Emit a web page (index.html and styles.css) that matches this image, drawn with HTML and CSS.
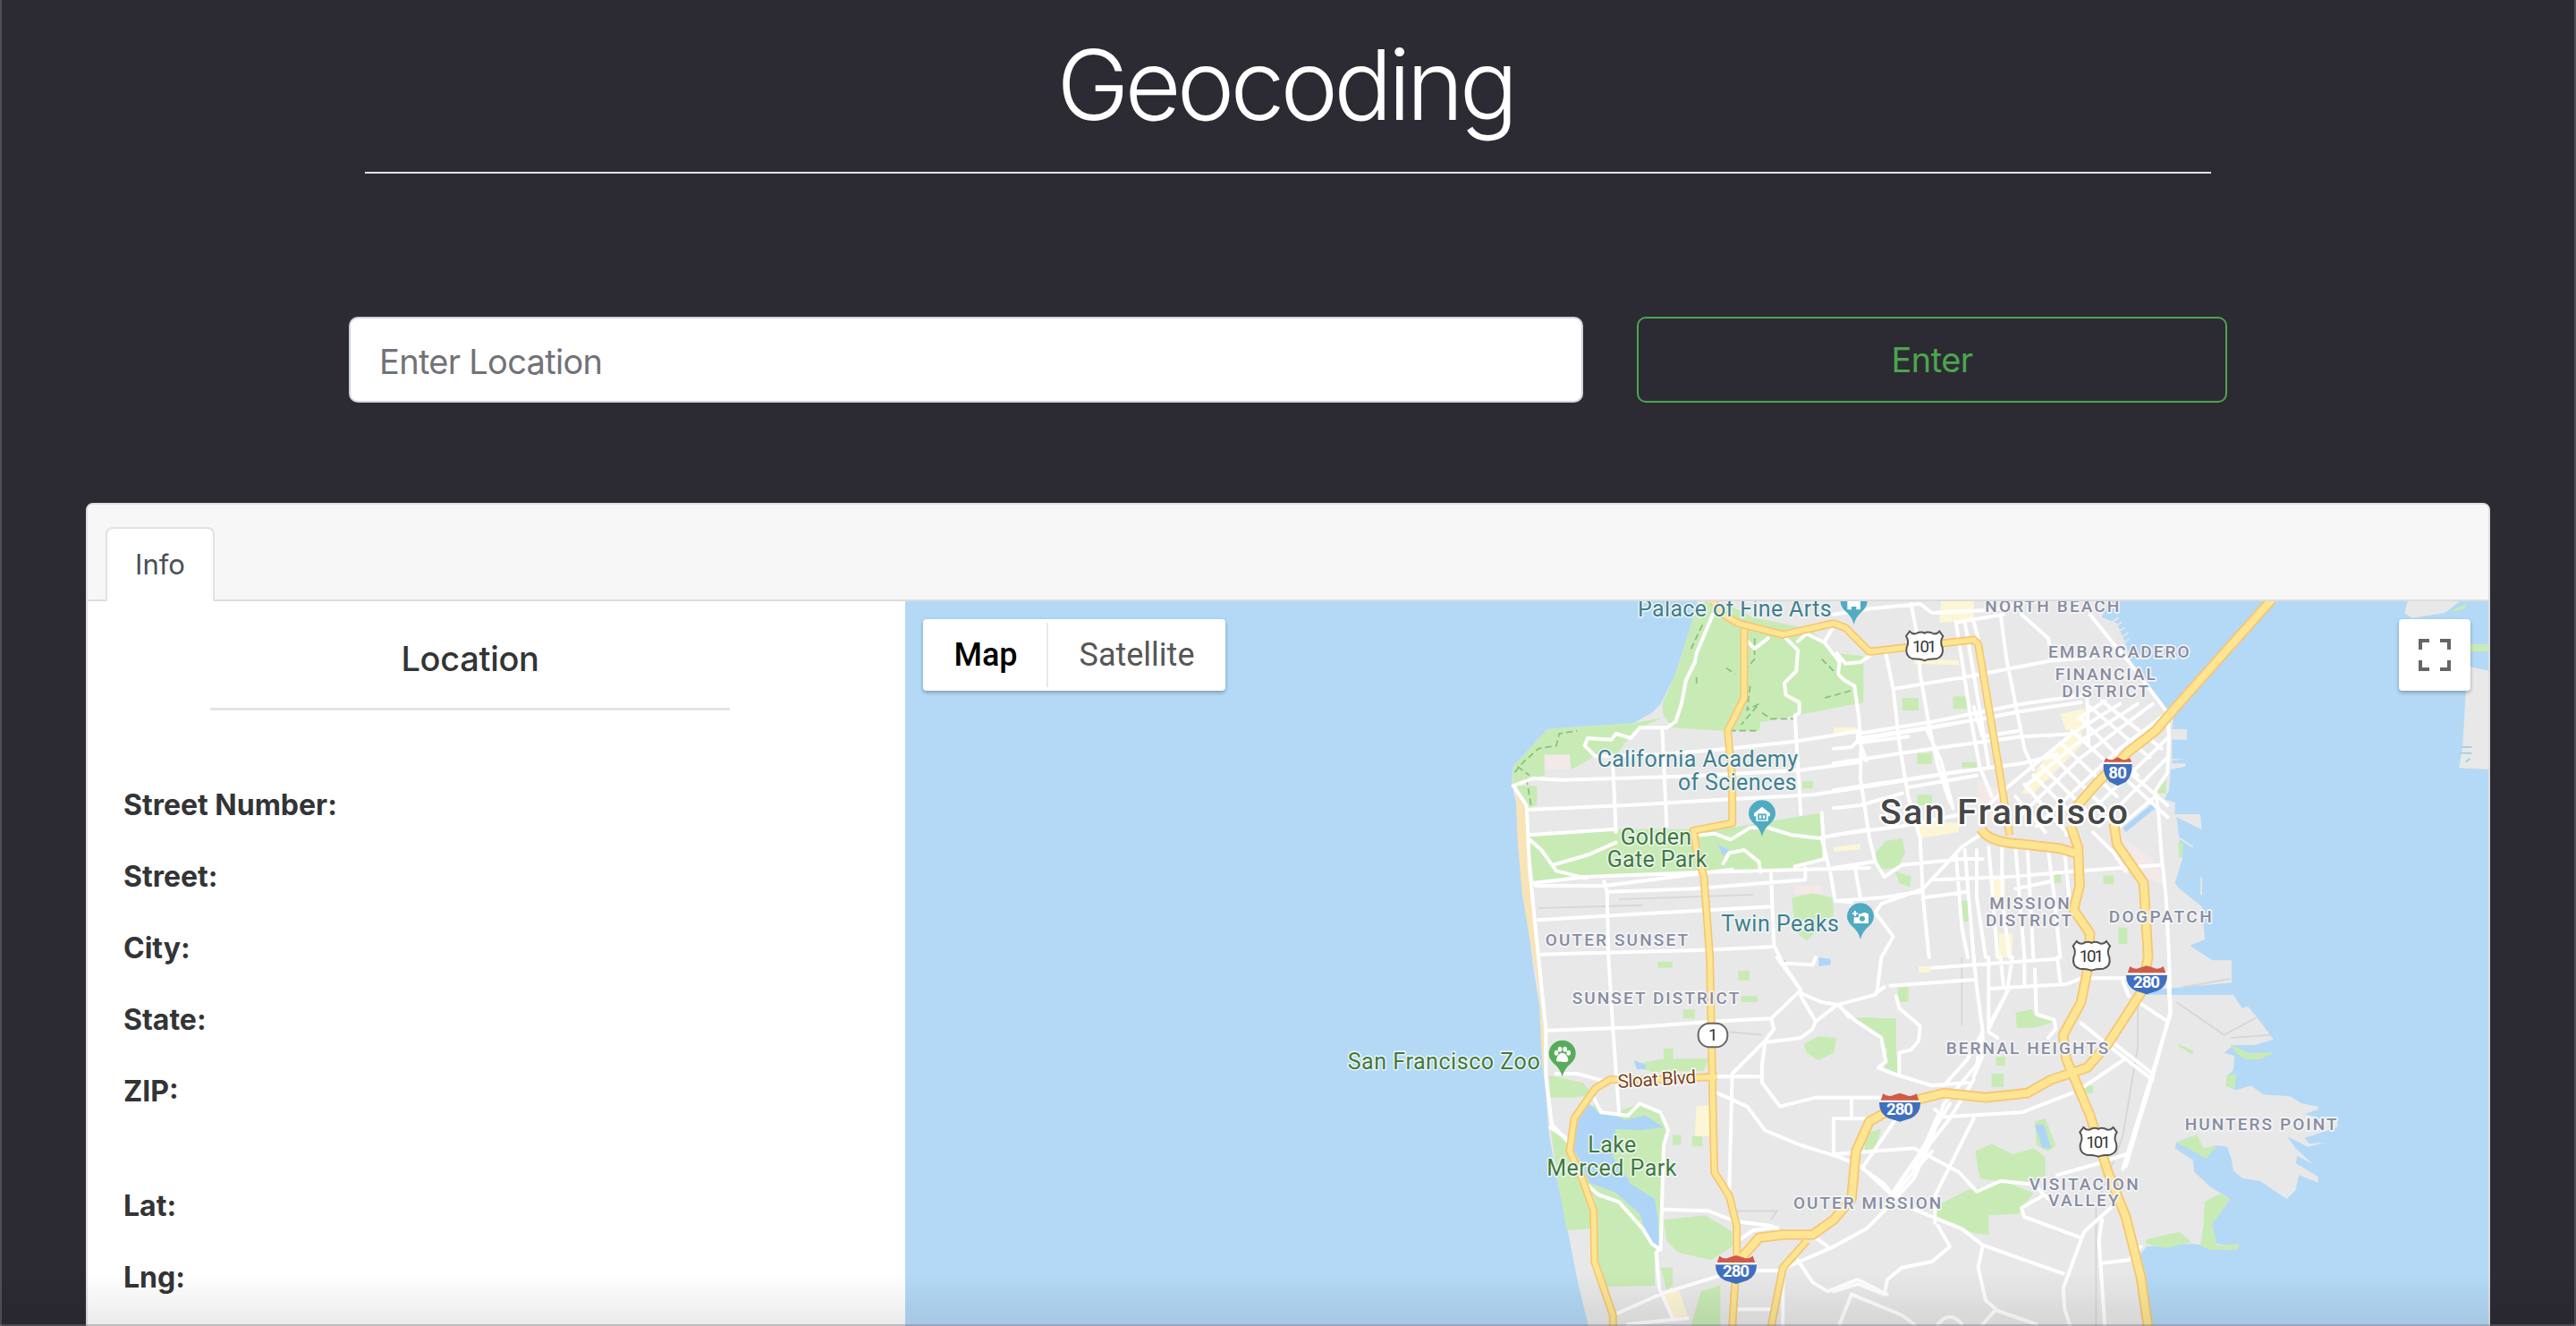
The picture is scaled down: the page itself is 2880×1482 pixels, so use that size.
FILE: index.html
```html
<!DOCTYPE html>
<html lang="en">
<head>
<meta charset="utf-8">
<title>Geocoding</title>
<link rel="stylesheet" href="styles.css">
</head>
<body>
<header class="page-header">
  <h1 class="title">Geocoding</h1>
</header>
<form class="search">
  <input class="search-input" type="text" placeholder="Enter Location">
  <button class="search-button" type="button">Enter</button>
</form>
<main class="card">
  <nav class="card-header"><a class="tab">Info</a></nav>
  <div class="card-body">
    <section class="info">
      <h2 class="info-title">Location</h2>
      <ul class="fields">
        <li>Street Number:</li>
        <li>Street:</li>
        <li>City:</li>
        <li>State:</li>
        <li>ZIP:</li>
      </ul>
      <ul class="fields coords">
        <li>Lat:</li>
        <li>Lng:</li>
      </ul>
    </section>
    <section class="map">
      <svg class="map-canvas" viewBox="-1944 6 5316 2430" preserveAspectRatio="none">
        <defs>
          <g id="us101">
            <path d="M-50-50Q-38-36-22-46Q-8-50 0-44Q8-50 22-46Q38-36 50-50L62-34Q50-16 60 4Q66 34 40 42Q14 42 0 48Q-14 42-40 42Q-66 34-60 4Q-50-16-62-34Z" fill="#fff" stroke="#555" stroke-width="6"/>
            <text class="num" x="-41" y="19" textLength="82">101</text>
          </g>
          <g id="i280">
            <path d="M-69-17H69Q70 20 38 36L0 48L-38 36Q-70 20-69-17Z" fill="#3f6fbf"/>
            <path d="M-64-24L-56-46Q-38-32-20-42L0-48L20-42Q38-32 56-46L64-24Z" fill="#cf5a48"/>
            <path d="M-68-20H68" stroke="#fff" stroke-width="5"/>
            <text class="inum" x="-45" y="25" textLength="90">280</text>
          </g>
          <g id="pin"><path d="M0 60Q-6 34-28 16Q-45 0-45-17A45 45 0 0 1 45-17Q45 0 28 16Q6 34 0 60Z"/></g>
        </defs>
        <rect x="-1944" y="0" width="5316" height="2440" fill="#b3d9f6"/>
        <!-- Peninsula -->
        <path fill="#e8e8e8" d="M715 0L700 60L640 250L590 350L560 380L500 415L340 425L210 435L150 500L95 560L90 620L105 680L110 800L125 980L150 1130L165 1250L190 1400L200 1600L215 1790L240 1930L275 2100L310 2280L350 2445H2220L2210 2260L2195 2200L2220 2170L2280 2165L2370 2160L2420 2165L2500 2182L2530 2170L2455 2160L2430 2130L2435 2090L2470 2040L2500 2010L2435 1970L2380 1920L2375 1880L2315 1840L2320 1820L2370 1800L2420 1870L2455 1830L2490 1835L2505 1880L2510 1915L2540 1940L2600 1950L2690 2010L2720 1980L2730 1930L2795 1955V1935L2720 1890L2725 1865L2775 1892L2720 1840L2690 1800L2760 1835L2820 1820L2765 1825L2750 1805L2860 1770V1740H2800L2750 1725L2795 1710V1700L2740 1690L2700 1665L2610 1660L2570 1630L2520 1645L2485 1630L2490 1595L2510 1580L2515 1530L2480 1520L2510 1495H2580L2645 1475L2590 1400L2560 1365L2540 1370L2510 1325H2290V1305L2505 1285V1210H2440L2365 1160L2415 1140L2405 1030L2330 970L2315 950L2340 870L2330 810L2320 730L2405 772L2400 720H2315V680L2280 670L2295 640L2300 570L2350 560V550H2305V540L2350 535H2305V470H2355V435H2305L2310 400L2290 370L2230 290L2170 220L2150 150L2120 80L2070 60L2090 0Z"/>
        <g fill="#e8e8e8">
          <path d="M3085 45L3095 6H3270L3220 45L3110 62ZM3290 70V310L3280 490L3268 565L3372 570V240L3300 225Z"/>
        </g>
        <g stroke="#a9cfe6" stroke-width="6" fill="none"><path d="M3275 495h35M3270 515h40M3290 545l15-12"/></g>
        <g stroke="#e4e6e8" stroke-width="6" fill="none">
          <path d="M2090 85l36-24M2100 100l36-24M2110 118l36-24M2122 135l36-24M2132 152l30-20M2403 990V930M2330 800l45 30"/>
        </g>
        <!-- Built-up tints -->
        <g fill="#f3e9e9"><path d="M200 520H285V570H205ZM2130 790L2250 880L2280 960L2210 930ZM1040 960h90v30h-90zM1650 600L1760 660V740H1660Z"/></g>
        <g fill="#fdf6d6">
          <path d="M1530 6H1640V70L1525 78ZM1170 430H1250V450H1170ZM1930 385L2010 365L2025 430L1950 440ZM1900 500L2000 440L2010 480L1840 650H1800ZM1700 930H1745V1040H1700ZM1725 1120H1770V1200H1725ZM1450 740L1590 750V780L1460 800ZM710 1700L760 1695V1800H705ZM600 2330L650 2310L680 2400L630 2410ZM1455 1230H1495V1250H1455ZM1440 195l150 10v15l-150-5zM1170 830l90-10v18l-90 8z"/>
        </g>
        <path fill="#fae3b4" d="M105 650L135 700L145 900L160 1080L180 1250L200 1500L195 1600L180 1300L150 1130L125 980L110 800Z"/>
        <!-- Parks -->
        <g fill="#c8ebb5">
          <path d="M740 6L700 60L640 250L595 350L600 390L630 430L820 442L920 440L925 412L1270 345V190L1180 180L1090 100L900 60L820 20Z"/>
          <path d="M600 395L500 415L340 425L210 435L150 500L95 560L92 620L140 600L200 590V520H285L290 570L370 525H440L500 440Z"/>
          <path d="M95 625H175V690L140 700Z"/>
          <path d="M145 795L440 770L700 770L830 765L1130 715L1135 870L1040 900L900 912L720 915L340 935L165 945Z"/>
          <path d="M1030 1000L1100 985L1170 1000L1160 1060L1080 1145L1040 1110ZM1170 1020v40l-20 10z"/>
          <path d="M1400 330h55v42h-55zM1570 325h55v42h-55zM1450 515h50v36h-50zM1600 545h50v18h-50zM1450 655h50v35h-50zM1345 810L1400 800L1410 850L1385 900L1320 905L1310 850ZM1375 910L1430 930L1425 965L1390 950ZM1595 1010h30v70h-30zM1910 920h22v30h-22zM2075 925h35v30h-35zM2125 1100h30v55h-30zM2245 635L2285 605V650H2250ZM2325 815h16v50h-12zM1065 610h35v24h-35z"/>
          <path d="M215 1595L330 1620L360 1660L300 1670L220 1670ZM500 1560L600 1540V1505H632V1540H750L735 1580L560 1585ZM850 1245h38v32h-38zM860 1330h55v20h-55zM665 1375h40v30h-40zM580 1215h50v20h-50zM1070 1490L1120 1465L1180 1470L1170 1520L1120 1545L1080 1520Z"/>
          <path d="M220 1770L285 1830L300 1880L350 1960L360 2110L275 2115L245 1950ZM305 1760L370 1690L390 1720H440L520 1690L600 1720L610 1770L595 1880L590 2170L570 2190V2300L410 2305L375 2200L370 2010L330 1950L290 1850ZM600 2080L740 2065L830 2120L830 2170L760 2215L650 2190L610 2150ZM590 2240h40v60l-20 15zM725 2320L790 2300L790 2440H690ZM630 1795h28v34h-28zM695 1800h35v34h-35z"/>
          <path d="M1220 1405L1290 1400L1330 1405H1380V1520L1390 1590L1340 1570L1350 1510L1280 1430ZM1385 1300h36v50h-36zM1780 1385L1835 1375L1850 1400L1910 1415L1850 1435L1785 1438ZM1700 1590h40v45h-40zM1715 1533h30v30h-30zM1275 1790L1330 1775L1310 1840L1275 1850ZM1645 1850L1700 1825L1770 1860L1840 1840L1880 1870V1930L1830 1960L1720 1950L1660 1940ZM1520 2030L1620 1980L1740 1950L1840 1990L1790 2060L1690 2065L1690 2130L1640 2125L1500 2065ZM1845 1750L1880 1740L1915 1830L1890 1850L1850 1830ZM2010 1630h30v26h-30z"/>
          <path d="M2325 1490l50 22v15l-45-28zM2500 1490L2560 1520L2650 1518L2600 1542H2550L2520 1520ZM2490 1595L2520 1590L2515 1640L2485 1632ZM2320 1820L2390 1795L2410 1840L2455 1830L2420 1875L2395 1860ZM2415 2020L2465 1992L2500 2010L2440 2095L2455 2165L2530 2160L2525 2180L2430 2180L2400 2165L2410 2100ZM2220 2145L2330 2120L2370 2155L2285 2175L2215 2160ZM3230 45l60-30v15zM3290 150h82v25h-82z"/>
        </g>
        <!-- Lakes and inlets -->
        <g fill="#aed5f8">
          <path d="M310 1750L350 1690L380 1720L440 1730L470 1745L540 1730L600 1770L520 1780L440 1775L430 1870L490 1960L570 2010L580 2070L585 2170L550 2150L520 2060L440 1990L350 1955L320 1880L280 1820ZM500 1545L540 1560V1575H510ZM1845 1760L1875 1760L1900 1840L1870 1840ZM2140 765L2245 680L2255 695L2150 780ZM2210 1305H2310V1325H2210ZM980 1195l45 25h-25zM780 820l40 20-20 20zM1120 1200l40 5v20l-40 5z"/>
        </g>
        <!-- Trails and rail -->
        <g stroke="#86bd7c" stroke-width="5" fill="none" stroke-dasharray="22 12">
          <path d="M100 580L130 545L180 500L240 490L250 450L310 440M730 85L690 170M905 130V200L870 240M890 290L880 370L920 350L860 420M820 440H910M930 380L960 400H1040M1130 200L1200 270M140 600L155 690M810 230l30 20M710 260v30M1140 330l90-25M110 560l40 30"/>
        </g>
        <g stroke="#d3d5d6" stroke-width="5" fill="none">
          <path d="M180 1035L530 1025M450 1005L900 990M2190 1300V1500L2140 1800L2050 2040V2436M2320 1350L2480 1460L2590 1400M2500 1470L2640 1460M1600 1200V1430M2340 1300L2500 1272M820 1450L930 1460M830 2050H980L960 2080"/>
        </g>
        <!-- Local streets -->
        <g class="streets">
          <path d="M765 50L710 180L705 210L675 270L660 350L640 410L610 430M875 135L905 165L950 130M1010 130L1050 170L1045 240L1005 280L1010 320L1055 345V380L1040 390L1060 720M1050 140L1080 115L1140 145L1190 210L1185 250L1205 270L1240 290L1255 400L1262 490L1260 600L1290 800L1310 880L1340 930M1140 140L1170 90M1180 180L1210 215L1260 210L1290 190"/>
          <path d="M610 430H520L490 465L440 450L425 470L345 465L335 490L370 525L590 520L820 500L1050 475L1260 440M595 430L610 760M95 625L160 600L260 605L440 600L700 592L1060 572L1260 545M430 560L440 780M100 630L140 690L150 900L170 1100L180 1200L205 1440L205 1600L225 1760L290 1830M140 705L480 690L820 670L1100 655L1300 625L1600 575"/>
          <path d="M145 790L440 770M150 805L190 840L240 910L340 935M230 890L350 855L440 815M720 790L770 785L825 805L890 765H950L1030 790L1120 800L1200 785L1290 770M1130 715L1140 870L1040 895M1130 800L1160 920L1175 1010L1230 1015M800 885L820 850L870 840L920 880L925 915M165 950L340 930L720 915L1080 905L1290 900M170 960H400L830 905M400 945L410 980L415 1200L430 1440L450 1720M415 980L700 970L1075 940V900M180 1075L500 1055L960 1030M960 920L970 1160L1000 1220L1060 1310M190 1190L740 1175L960 1165M1180 1010L1330 1000L1460 980"/>
          <path d="M1170 50L1300 30L1460 15M1430 15L1450 120L1460 250L1490 420L1520 560L1560 680M1345 180L1370 300L1390 480L1420 660L1460 800L1470 1000L1490 1200M1370 300L1640 255L1900 205L2040 195M1250 450L1500 410L1800 350L2020 320M1250 470L1500 430L1800 375L2000 345M1170 500L1230 495L1260 465L1700 395M1170 550L1500 500L1800 460L1980 450M1170 640L1500 590L1800 550L1920 520M1420 630L1650 590M1460 15L1500 45L1700 35L1800 15M1580 75L1600 200L1630 400L1660 560L1700 660M1610 75L1640 250L1660 370L1690 560M1640 75L1655 130M1730 50L1750 200L1780 350L1810 500L1840 570M1800 50L1890 130L1900 190M1590 75L1740 50M2030 50L2110 150L2170 220L2230 300L2290 380M1250 460L1280 540M1260 480L1420 460M1480 430L1530 540L1570 700M1170 790L1400 760L1600 720M1640 360L1670 460L1790 440M1170 700L1260 690L1400 650"/>
          <path d="M2070 340L2270 500M2030 360L2230 530M2000 400L2190 590M1970 440L2290 730M1930 480L2120 660M1900 520L2080 700M1870 560L2030 720M1840 590L1990 740M1810 620L1950 780M1780 660L1880 780M2290 380L2130 500L1850 760M2240 350L2000 530L1780 740M2190 350L1990 480L1820 620M2130 350L1970 450L1740 640L1680 700M2080 340L1990 400M2295 460L2170 580L2000 740L1950 790M2290 530L2200 620L2060 760M2140 560L2290 690M2250 660L2130 760M2020 330L2025 480M2290 380L2295 460L2290 580L2250 640L2260 720L2270 860L2285 1000L2295 1200L2300 1380L2240 1600L2150 1900"/>
          <path d="M1660 790L1600 830L1470 970L1330 1020L1310 1050L1370 1130L1330 1200L1315 1320M1340 930L1400 890L1600 870L1670 870M1240 890L1260 1000M1170 900L1300 880M1470 1000L1620 980M1510 940L1750 930L2000 910L2270 890M1580 850L1600 1100L1620 1200M1610 840L1640 1200M1650 840V1000L1680 1200M1690 830L1720 1200M1735 830V1000L1760 1200M1780 830L1810 1200M1820 830L1840 1200M1890 840L1910 1000L1930 1200M1945 850L1960 1000M1780 970L1900 945M2040 780L2110 850L2150 910"/>
        </g>
        <g class="streets">
          <path d="M205 1445L500 1435L760 1415L960 1405M980 1200L1060 1310L960 1405L970 1440L940 1480L830 1590L820 1980M1060 1330L1110 1415L1100 1440L1060 1470L940 1485L930 1560L930 1620L990 1700L1110 1670H1330M1060 1320L1130 1350L1190 1360L1220 1400M1010 1220L1100 1225L1110 1200M1110 1415L1180 1360L1310 1325M770 1600H930M780 1655L880 1700L940 1780L1060 1830L1190 1870L1260 1900L1370 2000L1440 2045M240 1590L310 1590L420 1620M365 1670L390 1720L480 1730L520 1690L590 1720L615 1780L600 1830L590 2170L575 2190L585 2310M220 1770L280 1810M340 1960L380 1995L450 2020L530 2110L560 2160L590 2180M600 2045L750 2050L840 2085L960 2100L980 2110M850 2150L900 2115L980 2105M430 2400L600 2325L780 2270M910 2250H1000M850 2380H970M480 2430L680 2410M590 2320L630 2410M1000 2250V2440M1170 1740V1860"/>
          <path d="M1050 2215L1100 2290L1150 2320L1250 2280L1350 2330M1010 2240L1170 2170L1280 2110L1350 2040L1440 1940L1490 1830L1540 1690L1650 1560L1665 1470M1110 2140L1150 2170"/>
          <path d="M1170 1860L1440 1840L1590 1920L1650 1985L1730 1950L1830 1960M1270 1910L1340 1960L1370 2000M1380 1740L1270 1900M1170 1740H1340M1230 1670V1740M1510 1710L1540 1735L1800 1720L1970 1655M1500 1850L1420 1940L1370 2000M1640 1740L1510 2000V2090M1440 2045L1600 2110L1670 2165L1940 2260M1670 2165L1655 2240L1680 2350L1720 2385L1850 2430M1520 2100L1560 2170L1500 2220L1400 2240L1350 2280L1340 2330M1170 2320L1250 2295L1340 2330M1190 2430L1230 2330L1400 2400L1440 2430M1520 2430Q1560 2380 1600 2430M1670 2430L1710 2385"/>
          <path d="M1190 1365L1240 1410L1330 1470L1345 1550L1320 1570L1345 1580L1370 1590L1500 1630L1620 1620M1380 1330L1390 1370L1460 1430L1455 1480L1430 1510L1390 1520V1590M1360 1295L1640 1275M1310 1320L1340 1300M1640 1200L1650 1300L1670 1450L1620 1540L1540 1630M1670 1450V1530L1640 1600M1690 1200V1440L1740 1340L1760 1300M1730 1200L1740 1300M1770 1200L1750 1320L1690 1430M1810 1200V1290M1690 1305L1950 1290L2000 1270L2150 1270M1500 1235L1920 1205M1845 1240L1850 1390L1910 1410L1915 1440L1890 1470M1920 1200L1930 1280M2000 1420L2110 1510L2240 1610M2100 1480L2240 1590M2200 1355L2290 1415M2140 1280L2160 1330M2000 1640L2140 1545M1690 1450L1720 1470M1640 1610L1560 1740L1410 1930L1370 1990M1560 1690L1450 1870L1360 2000M1520 1730L1440 1910"/>
          <path d="M1920 1930L2060 1890L2150 1860M1890 2010L1840 1960M1870 2000L1800 2040L1810 2070L2000 2140M2110 2030L2010 2120L1940 2310L1945 2380L1965 2440M2070 2080L2060 2150L2080 2440M2070 2225L2160 2215L2200 2170M2290 1250L2300 1390L2140 1910"/>
        </g>
        <!-- Highways -->
        <g fill="none" stroke-linejoin="round">
          <g stroke="#f6c673">
            <path stroke-width="27" d="M765 6L800 50L850 80L1000 118L1170 80L1210 95L1290 175L1640 135L1655 150L1730 600L1760 790M870 100V330L815 440L830 600V750L700 775L710 840L735 930L755 1200L765 1700L770 1920L820 2000L845 2100V2200L830 2440M780 1600L560 1610H420L370 1640L300 1740L285 1850L330 1950L365 2050L368 2220L430 2400V2440M1080 2150L1000 2240L960 2440"/>
            <path stroke-width="35" d="M2640 0L2310 370L2250 440L2160 510L2050 620L1980 700M1665 770Q1690 815 1800 820L1930 835L1980 850M1965 760L1990 830L1995 960L1975 1040L2030 1120L2020 1250L2000 1350L1940 1460L1950 1540L2030 1730L2090 1920L2150 2070L2200 2270L2225 2440M2110 750L2120 820L2210 950L2225 1200L2200 1320L2090 1490L2020 1570L1900 1610L1820 1655L1680 1670L1540 1655L1400 1690L1290 1750L1245 1850L1230 2010L1170 2080L1100 2130L1000 2130L920 2140L850 2220"/>
          </g>
          <g stroke="#fde592">
            <path stroke-width="17" d="M765 6L800 50L850 80L1000 118L1170 80L1210 95L1290 175L1640 135L1655 150L1730 600L1760 790M870 100V330L815 440L830 600V750L700 775L710 840L735 930L755 1200L765 1700L770 1920L820 2000L845 2100V2200L830 2440M780 1600L560 1610H420L370 1640L300 1740L285 1850L330 1950L365 2050L368 2220L430 2400V2440M1080 2150L1000 2240L960 2440"/>
            <path stroke-width="24" d="M2640 0L2310 370L2250 440L2160 510L2050 620L1980 700M1665 770Q1690 815 1800 820L1930 835L1980 850M1965 760L1990 830L1995 960L1975 1040L2030 1120L2020 1250L2000 1350L1940 1460L1950 1540L2030 1730L2090 1920L2150 2070L2200 2270L2225 2440M2110 750L2120 820L2210 950L2225 1200L2200 1320L2090 1490L2020 1570L1900 1610L1820 1655L1680 1670L1540 1655L1400 1690L1290 1750L1245 1850L1230 2010L1170 2080L1100 2130L1000 2130L920 2140L850 2220"/>
          </g>
        </g>
        <!-- Markers -->
        <g transform="translate(930 735)"><use href="#pin" fill="#4fabc2"/><path fill="#fff" d="M-27-18L0-40L27-18V-8H20V8H-20V-8H-27Z"/><path d="M-12-14H12V2H-12ZM0-14V2" fill="none" stroke="#4fabc2" stroke-width="5"/></g>
        <g transform="translate(1260 1080)"><use href="#pin" fill="#4fabc2"/><path fill="#fff" d="M-6-26H4L9-30H19L23-26H27V6H-22V-14H-6Z"/><circle cx="6" cy="-10" r="9" fill="#4fabc2"/><path d="M-18-36V-18M-27-27H-9" stroke="#fff" stroke-width="6"/></g>
        <g transform="translate(1238 24)"><use href="#pin" fill="#4fabc2"/><path fill="#fff" d="M-22-20H22V10H8V0H-8V10H-22Z"/></g>
        <g transform="translate(260 1540)"><use href="#pin" fill="#56ad58"/><g fill="#fff"><ellipse cx="-20" cy="-20" rx="7" ry="9"/><ellipse cx="-8" cy="-32" rx="7" ry="9"/><ellipse cx="9" cy="-32" rx="7" ry="9"/><ellipse cx="21" cy="-20" rx="7" ry="9"/><path d="M0-20C12-20 20-4 20 4S10 12 0 10S-20 12-20 4S-12-20 0-20Z"/></g></g>
        <!-- Route shields -->
        <use href="#us101" x="1475" y="157"/>
        <use href="#us101" x="2035" y="1196"/>
        <use href="#us101" x="2058" y="1820"/>
        <use href="#i280" x="2220" y="1276"/>
        <use href="#i280" x="1392" y="1703"/>
        <use href="#i280" x="843" y="2247"/>
        <g transform="translate(2123 577)"><path d="M-48-25H48Q50 12 28 34L0 48L-28 34Q-50 12-48-25Z" fill="#3f6fbf"/><path d="M-47-32L-40-45Q-24-36-14-41L0-48L14-41Q24-36 40-45L47-32Z" fill="#cf5a48"/><path d="M-48-28H48" stroke="#fff" stroke-width="5"/><text class="inum" x="-31" y="22" textLength="62">80</text></g>
        <g><rect x="716" y="1421" width="98" height="80" rx="38" fill="#fff" stroke="#666" stroke-width="6"/><text class="num" x="750" y="1478">1</text></g>
        <!-- Labels -->
        <g class="poi">
          <text x="513" y="57" textLength="650">Palace of Fine Arts</text>
          <text x="377" y="560" textLength="673">California Academy</text>
          <text x="648" y="638" textLength="398">of Sciences</text>
          <text x="793" y="1112" textLength="395">Twin Peaks</text>
        </g>
        <g class="poi park">
          <text x="455" y="822" textLength="238">Golden</text>
          <text x="410" y="898" textLength="335">Gate Park</text>
          <text x="-460" y="1575" textLength="645">San Francisco Zoo</text>
          <text x="346" y="1855" textLength="162">Lake</text>
          <text x="208" y="1932" textLength="435">Merced Park</text>
        </g>
        <text class="road" x="447" y="1638" textLength="263" transform="rotate(-3.5 447 1638)">Sloat Blvd</text>
        <g class="area">
          <text x="203" y="1162" textLength="478">OUTER SUNSET</text>
          <text x="1678" y="43" textLength="450">NORTH BEACH</text>
          <text x="1890" y="195" textLength="473">EMBARCADERO</text>
          <text x="1913" y="270" textLength="336">FINANCIAL</text>
          <text x="1936" y="327" textLength="290">DISTRICT</text>
          <text x="1693" y="1037" textLength="268">MISSION</text>
          <text x="1680" y="1095" textLength="288">DISTRICT</text>
          <text x="2093" y="1083" textLength="345">DOGPATCH</text>
          <text x="293" y="1355" textLength="560">SUNSET DISTRICT</text>
          <text x="1035" y="2043" textLength="496">OUTER MISSION</text>
          <text x="1547" y="1525" textLength="545">BERNAL HEIGHTS</text>
          <text x="1826" y="1980" textLength="366">VISITACION</text>
          <text x="1890" y="2035" textLength="236">VALLEY</text>
          <text x="2348" y="1778" textLength="510">HUNTERS POINT</text>
        </g>
        <text class="city" x="1325" y="752" textLength="832">San Francisco</text>
      </svg>
      <div class="map-type"><button class="type active">Map</button><button class="type">Satellite</button></div>
      <button class="fullscreen" aria-label="Toggle fullscreen">
        <svg viewBox="0 0 18 18"><path fill="#666" d="M0 0v6h2V2h4V0H0zm16 0h-4v2h4v4h2V0h-2zm0 16h-4v2h6v-6h-2v4zM2 12H0v6h6v-2H2v-4z"/></svg>
      </button>
    </section>
  </div>
</main>
<div class="bottom-shade"></div>
</body>
</html>
```
FILE: styles.css
```css
* { box-sizing: border-box; }
html, body { height: 100%; }
body {
  margin: 0;
  overflow: hidden;
  background: #2c2b34;
  color: #333436;
  font-family: Inter, "Liberation Sans", sans-serif;
  font-size: 32px;
  position: relative;
  box-shadow: inset 2px 0 #51505a, inset -2px 0 #51505a;
}
.page-header {
  width: 2064px;
  height: 194px;
  margin: 0 auto 160px;
  padding-top: 27px;
  border-bottom: 2px solid #e1e3e8;
}
.title {
  margin: 0;
  padding-right: 6px;
  color: #fff;
  font-size: 109px;
  font-weight: 300;
  line-height: 134px;
  letter-spacing: -4.9px;
  text-align: center;
}
.search { display: flex; gap: 60px; width: 2100px; margin: 0 auto; }
.search-input, .search-button { height: 96px; border-radius: 10px; font: 400 38px/1.5 Inter, sans-serif; }
.search-input { width: 1380px; padding: 4px 32px 0; border: 2px solid #ced4da; background: #fff; letter-spacing: -0.7px; }
.search-input::placeholder { color: #717377; opacity: 1; }
.search-button { flex: 1; border: 2px solid #4ca64c; background: transparent; color: #4ca64c; padding: 0; letter-spacing: -0.6px; }
.card {
  width: 2688px;
  height: 930px;
  margin: 112px auto 0;
  background: #fff;
  border: 2px solid #dfdfdf;
  border-radius: 8px 8px 0 0;
  overflow: hidden;
}
.card-header { display: flex; align-items: flex-end; height: 108px; padding-left: 20px; background: #f7f7f7; border-bottom: 2px solid #dcdcdc; }
.tab { width: 122px; height: 83px; margin-bottom: -2px; border: 2px solid #dee2e6; border-bottom: 0; border-radius: 8px 8px 0 0; background: #fff; color: #495057; font-size: 31px; line-height: 80px; text-align: center; }
.card-body { display: flex; height: 820px; }
.info { width: 914px; flex: none; padding: 37px 40px; }
.info-title { width: 581px; height: 85px; margin: 0 0 0 97px; border-bottom: 3px solid #e4e4e4; font-size: 38px; font-weight: 500; line-height: 54px; letter-spacing: -0.3px; text-align: center; }
.fields { list-style: none; margin: 66px 0 0; padding: 0; font-size: 32px; font-weight: 700; line-height: 80px; letter-spacing: 0; }
.coords { margin-top: 48px; }
.map { position: relative; flex: 1; }
.map-canvas { display: block; width: 1772px; height: 810px; font-family: Roboto, sans-serif; }
.map-canvas text { paint-order: stroke; stroke-linejoin: round; }
.streets { fill: none; stroke: #fff; stroke-width: 12; stroke-linejoin: round; stroke-linecap: round; }
.poi { font-size: 75px; fill: #437d90; stroke: #eef6f4; stroke-width: 9; }
.park { fill: #41793d; }
.area { font-size: 57px; font-weight: 500; fill: #888c9f; stroke: #f4f5f7; stroke-width: 10; }
.city { font-size: 119px; font-weight: 500; fill: #474747; stroke: #fff; stroke-width: 14; }
.road { font-size: 63px; fill: #7a4524; stroke: #fff; stroke-width: 9; }
.num { font-size: 56px; fill: #333; }
.inum { font-size: 56px; font-weight: 700; fill: #fff; }
.map-type { position: absolute; left: 20px; top: 20px; display: flex; width: 338px; height: 80px; padding: 4px 0; background: #fff; border-radius: 4px; box-shadow: 0 2px 4px rgba(0,0,0,.3); }
.type { flex: 1; padding: 0; border: 0; background: none; color: #565656; font: 400 36px/72px Roboto, sans-serif; }
.type.active { flex: 0 0 140px; padding-left: 2px; border-right: 2px solid #e8e8e8; color: #000; font-weight: 500; }
.fullscreen { position: absolute; right: 20px; top: 20px; width: 80px; height: 80px; padding: 22px; border: 0; border-radius: 4px; background: #fff; box-shadow: 0 2px 4px rgba(0,0,0,.3); }
.map { flex: none; width: 1770px; }
.fullscreen svg { display: block; width: 36px; height: 36px; }
.bottom-shade { position: absolute; left: 0; right: 0; bottom: 0; height: 60px; border-bottom: 2px solid rgba(110,108,120,.45); background: linear-gradient(rgba(0,0,0,0), rgba(0,0,0,.08)); }
```
